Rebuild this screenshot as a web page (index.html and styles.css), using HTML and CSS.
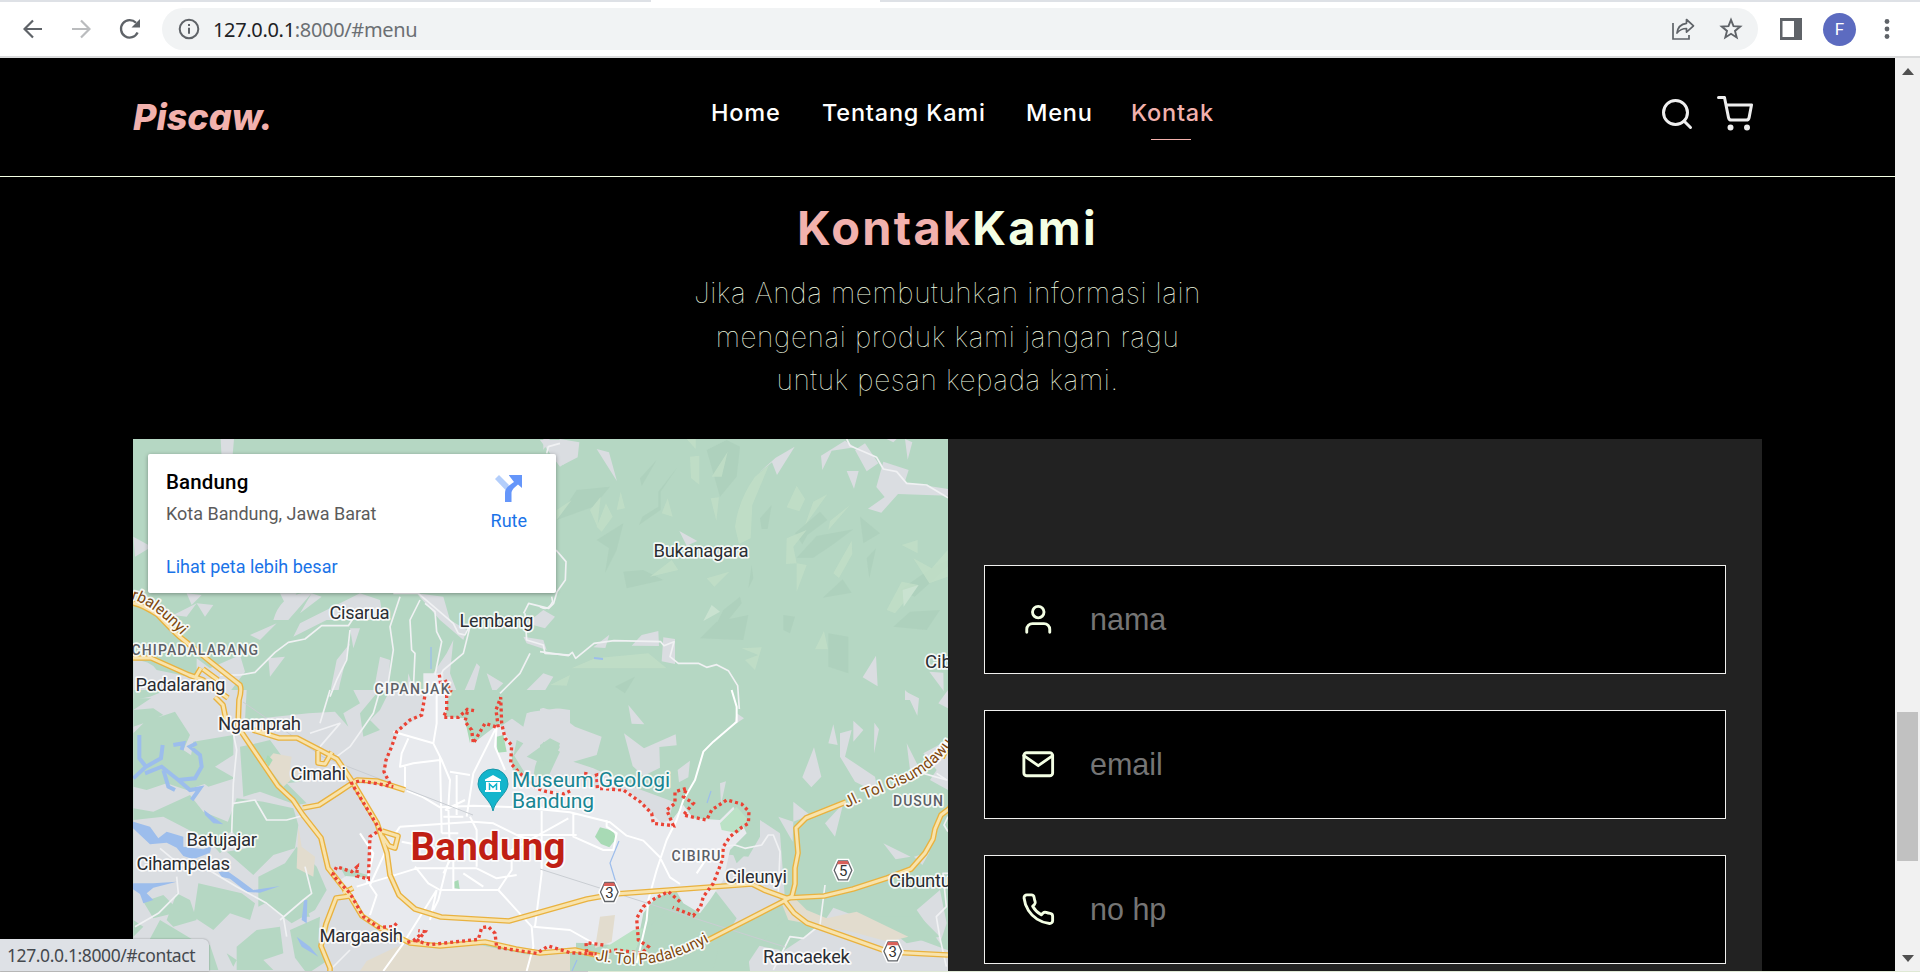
FILE: index.html
```html
<!DOCTYPE html>
<html lang="id">
<head>
<meta charset="utf-8">
<title>Piscaw</title>
<link rel="stylesheet" href="styles.css">
</head>
<body>
<div class="browser">
  <div class="tabstrip"><span class="tab-edge"></span></div>
  <div class="toolbar">
    <svg class="tb-icon back" viewBox="0 0 20 20"><path d="M19 10H2M10 1.500L1.500 10l8.500 8.500" fill="none" stroke="#5f6368" stroke-width="2.200"/></svg>
    <svg class="tb-icon forward" viewBox="0 0 20 20"><path d="M1 10h17M10 1.500L18.500 10 10 18.500" fill="none" stroke="#babcbe" stroke-width="2.200"/></svg>
    <svg class="tb-icon reload" viewBox="0 0 22 22"><path d="M18.600 14.500A8.700 8.700 0 1 1 17 4.800" fill="none" stroke="#5f6368" stroke-width="2.300"/><path d="M21 1v8.500h-8.500z" fill="#5f6368"/></svg>
    <div class="omnibox">
      <svg class="info" viewBox="0 0 22 22"><circle cx="11" cy="11" r="9.300" fill="none" stroke="#5f6368" stroke-width="2"/><path d="M10 9.800h2v6h-2zM10 6h2v2h-2z" fill="#5f6368"/></svg>
      <span class="url"><b>127.0.0.1</b>:8000/#menu</span>
      <svg class="share" viewBox="0 0 24 24"><path d="M2 6v16h16v-4" fill="none" stroke="#5f6368" stroke-width="1.700"/><path d="M15.500 2.500l7 6.300-7 6.300v-3.600c-4 0-6.500 1-9.500 4.500.6-5.200 3.500-9 9.500-9.700z" fill="none" stroke="#5f6368" stroke-width="1.700" stroke-linejoin="round"/></svg>
      <svg class="star" viewBox="0 0 24 24"><path d="M12 2.900l2.500 6.300 6.700.4-5.200 4.300 1.700 6.600-5.700-3.700-5.700 3.700L8 13.900 2.800 9.600l6.700-.4z" fill="none" stroke="#5f6368" stroke-width="1.900"/></svg>
    </div>
    <svg class="panel" viewBox="0 0 22 22"><path d="M0 0h22v22H0zM2.500 3v16H14V3z" fill="#5f6368" fill-rule="evenodd"/></svg>
    <span class="avatar">F</span>
    <svg class="dots" viewBox="0 0 6 22"><g fill="#5f6368"><circle cx="3" cy="3.500" r="2.400"/><circle cx="3" cy="11" r="2.400"/><circle cx="3" cy="18.500" r="2.400"/></g></svg>
  </div>
  <div class="viewport">
    <div class="page">
      <header class="navbar">
        <a class="logo">Piscaw.</a>
        <nav class="links">
          <a class="n-home">Home</a><a class="n-about">Tentang Kami</a><a class="n-menu">Menu</a><a class="n-contact active">Kontak</a>
        </nav>
        <div class="extra">
          <svg class="feather" viewBox="0 0 24 24"><circle cx="11" cy="11" r="8"/><path d="M21 21l-4.350-4.350"/></svg>
          <svg class="feather" viewBox="0 0 24 24"><circle cx="9" cy="21" r="1"/><circle cx="20" cy="21" r="1"/><path d="M1 1h4l2.680 13.390a2 2 0 0 0 2 1.610h9.720a2 2 0 0 0 2-1.610L23 6H6"/></svg>
        </div>
      </header>
      <section class="contact">
        <h2><span>Kontak</span><span class="kami">Kami</span></h2>
        <p><span class="l1">Jika Anda membutuhkan informasi lain</span><br><span class="l2">mengenai produk kami jangan ragu</span><br><span class="l3">untuk pesan kepada kami.</span></p>
        <div class="row">
          <div class="map">
            <svg class="map-art" viewBox="133 439 815 532">
              <defs>
                <path id="p1" d="M131 599C150 604 168 621 184 638"/>
                <path id="p2" d="M595 960C640 968 665 966 712 940"/>
                <path id="p3" d="M847 808C885 787 925 786 954 741"/>
                <g id="shield"><path d="M-5-10H5L9.500 0 5 10H-5L-9.500 0z" fill="#fff" stroke="#fff" stroke-width="3"/><path d="M-4.500-9.500h9L8.800 0 4.500 9.500h-9L-8.800 0z" fill="#fff" stroke="#5f6368" stroke-width="1.300"/><path d="M-4.600-9.300h9.200l1.500 3.300H-6.100z" fill="#d9605a"/></g>
              </defs>
              <rect x="133" y="439" width="815" height="532" fill="#b5d7c3"/>
              <!-- terrain shading -->
              <g transform="translate(540 430) scale(.33333)">
                <g fill="#aacdb9">
                  <path d="M300 145l50-55-45 78zM355 185l57-73-50 73v55l-65 45 10-25 48-30zM50 270l60-90 100-10-50 60zM170 330l80-50-20 80-35 70 12-75zM250 425l60-5 60 30-110 25zM480 625l50-50 95-20-15 75zM525 590l25-50 50-40 5 20-40 50zM660 265l35-40-12 72h-18zM765 310l75-65 22 25-60 45-15 28zM770 383l60-65 110-20-60 45-60 40zM848 503l60-55 27 40zM980 385l28-30-20 90zM1060 590l50-45 90-5-40 60zM865 610l60 10v110l-60-20zM1080 480l100-70 44-20v20l-100 90zM500 60l60-30 40 20-10 90-50 60zM730 555l35 5-15 50-20-10zM225 770l60-30-30 50zM960 260l60 50-50 30zM635 405l-10 70 15-30z" opacity=".6"/>
                </g>
                <g fill="#c1dec7" opacity=".85">
                  <path d="M440 27h27v30zM450 80l28-3v87l-25-20zM515 140l48-75-18 75zM512 205l25-3-8 70zM585 290q10-80 60-150l42-35-50 120-5 100-35 17zM740 232l30-65 25 40-17 37zM795 285l25-70 42-22zM740 325l60-25-40 50 10 50-32 2zM770 400l30 5-30 80zM865 300l65-75-60 48zM880 430l55-98 2 40-40 72zM1085 345l48-15v40zM1120 385l55 30 48-55v80l-55 20zM1040 540l45-85 50 10-70 85zM50 240l45-30-45 60zM150 240l32-40-10 90zM170 290l28-70 20 40-33 45zM230 240l12-55 13 50zM365 250l18-45 15 55zM500 445l68-20-45 45zM330 440l65-50 20 30zM605 655l60-3-20 68-30-30 40-15zM825 658l27-55 12 55zM95 715l70-30 160-15 55 45zM30 765l60-30-10 32z"/>
                </g>
                <path d="M490 573l25-48 25 20zM1088 480l48-15-45 65z" fill="#c9e2d0"/>
              </g>
              <!-- bare land -->
              <g fill="#dadde1">
                <g transform="translate(130 430) scale(.33333)"><path d="M272 27h40l-5 60h-32zM10 320l55 30-50 30zM170 490l45 5-30 30zM430 570q20-70 85-80h30l-70 80zM450 490h50l-30 40zM130 555l70-35-30 40zM200 520l50 5-25 35zM510 550l35-60 30 10zM630 520l60-30 60 20 10 60h-170l-100 50 20-40zM860 490l80 10 20 70 50 30-10 30-70-60zM1190 580l50-40 35 20-30 35zM1180 620l60 10 10 30-60-20zM415 685l50-5-45 60zM360 615l80-35-50 50zM660 595h30l-20 60zM1230 30h80l10 60-30 20zM1070 730l50 30-30 30zM1180 790l60-60 30 10-30 50zM910 730l40-60 20-40-10 100 30 80H870zM1000 790l40-90 10 10-20 80zM830 790l5-60 20 60zM730 790l20-110 30 10-5 100zM10 690q50 0 70 30l120 25v-60l40 30 90-40 15 50-60 80H10zM600 790l20-100 40-50-30 120-10 50z"/></g>
                <g transform="translate(540 430) scale(.33333)"><path d="M60 27l58 10-5 45-45 23-20-60zM10 27h20L10 60zM170 57l37 10 24 87zM418 303l54 30-32 14zM657 128l50-45 57-33-53 85-15-38zM843 77l72-45 30 20-70 10-28 58zM920 123h36l-14 53zM945 60l30-20 40 60-35 24zM1030 95l76 25-12 37 130 20v20l-150-5-50 56-40-12 50-35-25-30zM1095 27l22 10-14 52zM1040 27h30l-10 10zM275 647l30-32 50-12 2 45zM370 622l35 5v75l-40-8zM160 652l48-38-12 40zM968 742l40-65 5 92zM1168 725l42 3 1 55zM1095 780l30 30h-30z"/></g>
                <g transform="translate(130 690) scale(.33333)"><path d="M10 60L100 0h760l40 0-20 80-80 50-30 110 30 50-120-10 80 140-30 20v120l-100-30 80 150 160 70v93H10zM1110 110l60-40 150-20v280l-110-40-80-130z"/></g>
                <g transform="translate(540 690) scale(.33333)"><path d="M0 50l45 15 60 45 80 30-15 55-70 20 60 20 130 60 110 40-20 80-120-10-60-70-200-50zM265 45l48 58-38-2zM252 130l60 45 95-42 3 33-52 5 2 62-50 25-32-30zM413 240l37-28-5 50-28 15zM590 70l22 15-30 20zM865 160l15-57 13 62zM940 92l30 28-30 35zM1003 98l14 20-15 72zM1098 5l39 20-5 52zM1195 40l29-40v55zM787 262l35-90 22 88-30 32zM900 130l35-10-20 80 90 60 10 50-70-35-45-75zM1100 160l48 95-38-15zM855 400l55-60-25 100zM760 335l50 40-50 20zM715 380l45 15-2 60zM660 390l60 40 15 200-100-30-170-60 60-50 100 10 35-60zM1030 460l82 40-45 8zM1122 500l47-15-22 40zM555 540l165 70 30 40-200 70-60-60zM1150 190l74-40v150l-54-30 20-30zM400 732l45-38-15 65zM540 280l18-6-15 70zM640 843l150-100 70-60 20-30 350 130v60zM620 760l100 20-40 63h-50zM1130 660l70-60 20 100-20 60z"/></g>
              </g>
              <!-- forest patches over bare land -->
              <g transform="translate(130 690) scale(.33333)" fill="#b5d7c3">
                <path d="M10 30l50-10 50-20h-100zM350 0h320l20 40-50 30 15 40-40-45-80 5-190 20zM330 170l50-10 40-10 40 55 50 70-40 5 60 60-30 5-110-40-50 15zM320 325l80 10 90 20 15 50-10 70-65 20-60 60-80-70 60-10-60-70zM385 560l80-40 35-50 60 60 30 70-35 60-70 40-80-60-20 10zM140 610l40 20 20 60-70 20-20-20zM205 580l130 30 40 30-15 50-60-20-50 50-60-40zM10 690l30 20-30 30zM90 690l100 60 50 15 25 75H10zM320 770l60-50 70-10 10 80-60 20 30 30H320zM480 720l90-40-5 70 30 60-50 33h-20l-30-40zM690 70l50-60 40-10-30 60-30 30 30 30-50 20zM290 790l30 20-10 20zM500 680l20-50 20 50z"/>
                <path d="M10 355l60 10 110-50 40 50 110 45-60 35-60-8-110-57-90 10zM10 130l40-40 40-10 45-15 45 70-20 45 60 40 10 60-60 20-60-20-60 20-40-10zM190 155l120-20v60l-55 35 60 35-80 25-60-45zM10 60l60-5 30 20-60 25-30 10z"/>
                <path d="M960 0h360v60l-70-10-60 20-10 40-70-50-60 40-20 60-30-80-50-20zM1190 200l70-50 30 20-30 60zM1160 150l20 10-30 40zM1215 230l25-75 50 30-35 75-45 0z"/>
                <path d="M240 455l30-25 30 30-30 30zM40 635l60-20 50 50-80 20z"/>
              </g>
              <g transform="translate(540 690) scale(.33333)" fill="#b5d7c3">
                <path d="M0 165l30-20 30 15-20 60-40-10zM300 735l90-80 60-20 70-40 70 90-40 70-180 70h-90zM540 760l90-60 100-80 10 60-70 70-60 90h-90zM570 470l70 0-50 50zM650 390l-40 60 10-60zM1000 680l100 80 100-20-60-60z"/>
              </g>
              <!-- city -->
              <g fill="#e8eaee">
                <g transform="translate(130 690) scale(.33333)"><path d="M885 0h70l-8 80 55 5 28 75 78-60 35 60 5 80 60 50 130 0v500l-100-5-170-30-210 8-160-75-80-110 30-20 65 5 5-125 30-20-80-140 115 10-18-45 32-115 75-50zM880-50h60v60h-60z"/></g>
                <g transform="translate(540 690) scale(.33333)"><path d="M-20 290l190 0 100 15 65 65 30 30 35-15 30-40 30 40 80 5 40-40 40 80-50 50-20 90-40 60-30 40-50-30-20-35-60 15-40 50-20 100-140-10-150-5z"/></g>
              </g>
              <g transform="translate(130 690) scale(.33333)" fill="#e2dcce">
                <path d="M430 190l55 10-5 35 30 10-50 45-55-70zM505 410l10 60 40 30-5 60-50-25zM800 770l200-15 200 40 120-5v53H690l20-30z"/>
                <path d="M405 215l8-20 15 15-12 20z" fill="#a8dab5"/>
              </g>
              <g transform="translate(540 690) scale(.33333)" fill="#e2dcce">
                <path d="M760 620l40 40 60 25 90-20 155 75-60 15-110-30-190-35-20-50zM180 680l45-5-10 80-50 20z"/>
                <g fill="#bbe2c6"><path d="M540 400l50-50 35 40-30 40-50-10zM200 770l80-50 30-5-25 70-60 10z"/></g>
                <path d="M165 440l15-28 40 10 8 25-20 25-25-10z" fill="#a8dab5"/>
              </g>
              <g transform="translate(130 690) scale(.33333)" fill="#a8dab5"><path d="M1100 140l20-5 10 50-28 3zM972 575l13-5 4 27-16-3zM1005 90l20 30-5 40z"/></g>
              <!-- water -->
              <g transform="translate(130 690) scale(.33333)" fill="#9cbdec">
                <path d="M10 395l50 15 25 35 25-20 50 15 0 30 60 8 25-10-5 20-50 20-30-10-20-25-30-15-50 5-55-52zM222 360l20 15 38 28-30-3-25-25zM265 545l30 0 35 25 40 30 80-12-60 20-40-2-50-40-25-5zM10 580l60 0 70-5-70 18-20 17 20 20-30 10-10-28-25-17zM522 630l10 0-2 70-15-10zM500 740l40 30 25 30-50-30z"/>
                <path d="M28 135l0 70 20 25-38 35M48 230l45-25 5-40M45 250l50-20 50 40 50-5 20-35-5-35-30-25 20-10M130 165l30-5-5 20M145 270l35 30 30-5-25 35M100 240l15 50 20 10" fill="none" stroke="#9cbdec" stroke-width="12"/>
              </g>
              <g fill="none" stroke="#9cbdec" stroke-width="1.200">
                <path d="M431 647v22M619 841l-9 22 6 20M711 791l-4 12M577 960l-5 11"/><path d="M594 658l9 1" stroke-width="2"/>
              </g>
              <!-- minor roads -->
              <g fill="none" stroke="#f0f1f3" stroke-width="5" stroke-linejoin="round">
                <g transform="translate(130 430) scale(.33333)">
                  <path d="M1250 70l5-20 35-10M1278 360l30 35-2 55-25 35-10 35-15 15-60-15-15 30M330 735l45-8 60-60 40-30 50-10 50-40h80l20-30M660 600l-10 90-30 60-20 50M790 490h75l105 90 15 30M810 500l-30 90 10 70-20 130M870 510l-30 60 5 90 10 10-5 110M885 520l30 25 5 60 15 30-20 100M985 610l20 5 15-30M1020 590l-20 80-60 50-15 30M1185 550l5 80 50 15 5 25 75 5M1200 670l-30 60-60 60M330 735l-60 0"/>
                </g>
                <g transform="translate(540 430) scale(.33333)">
                  <path d="M920 27l10 20 80 35 20 35 40 8 30 35 60 5 64 38M0 530q25 15 38-15l-3-15M0 665l85 12 12-10 10 18 55-45 60-8 140 3 10 12 30-12-12 45 25 20 60 0 25 12 30-8 35 18 28 45 5 70"/>
                </g>
                <g transform="translate(130 690) scale(.33333)">
                  <path d="M345 120l-35 10 10 50-10 100-5 150M310 340l65-10 35 60 60 0 55-15M620 200l40-30 70-100 20-70M540 130l90-30-60 70M600 0l-30 100M470 740l-10-60-50-40-90-50-100-60-70-5-60-50M140 560l5 50-60 60-70 40M450 690l70-60 25-20-20-80M600 840l60-60"/>
                </g>
                <g transform="translate(540 690) scale(.33333)">
                  <path d="M550 470l35-5 30 10 50-10 20-30 15 0 20 50-5 120M700 840l50-100 40 5 50-40 15-120M1224 550l-15 0 10 100-30 30 10 60 20 90M1224 380l-12 25 12 20M1150 250l70 20-30-20"/>
                </g>
              </g>
              <g fill="none" stroke="#fff" stroke-width="6" stroke-linejoin="round">
                <g transform="translate(330 660) scale(.33333)">
                  <path d="M330 60l-10 50 0 80-10 60 25 50 25 60-5 80 5 150-15 50-20 80-15 30M190 215l120 35M235 235l-20 45-5 40 40-10 80-10M330 290l5 230M225 320l0 70M230 392l50 20 50 30 100-5 140 5 150 15 120 30 50 40 50 15 50 50 30 60 30 20M500 200l-40 80-30 60-20 130M500 200l-5 60 30 70M360 335l60 10M210 500l220-15 60 5 80 40 90 20M380 345l0 120M210 500l-20 30M215 545l100 20M80 680l100-30 80-25 180 0 60 30 60-10M255 620l40 50 35 20 175 0 40-60 0-60 170-95M320 690l-100 160-60 83M320 690l-20 90M400 640l60 40M340 640l30-60 0 110M505 690l100 110 5 60-20 73M610 800l110 10 80 45M635 440l0 200-20 160M90 520l40 60-20 90M180 545l-60 130 20 30-20 60M730 460l0 70 90 40 30 0 10-50-30-20v-20M560 525l180 0M1060 420l-20 60-30 60-30 90-25 90-5 60-30 130M1100 640l40-60M420 470l20 40 0 110M345 450l60-30M340 470h60M335 520h50"/>
                </g>
                <g transform="translate(540 690) scale(.33333)">
                  <path d="M575 0l15 50 0 45-70 60-30 30-25 85-35 60"/>
                </g>
              </g>
              <path d="M540 869L785 947M243 702l80 55 150 58" fill="none" stroke="#c9cdd2" stroke-width="1"/>
              <!-- toll roads -->
              <g fill="none" stroke-linejoin="round">
                <g stroke="#e9b23f" stroke-width="5.700">
                  <path d="M133 603Q143 605 158 615Q172 630 180 637L212 663L240 685Q242 690 239 700L238 727L278 786L293 800L303 815L321 838L328 868L350 896L362 916L380 928L410 943L440 946L485 942L516 949L540 953L575 950L600 956"/>
                  <path d="M133 658h18l38 17 14 5 25 18M201 668l-6 10M203 669l15 11M215 697l8 8 3 15M253 730l26 8h18l25 13 15 8 15 22 25 42 10 30 3 22 9 20 16 14 26 8 68 4 32-9 46-13 28-5 137-10 12 6 22 8 38-2 29-7 34-11 24-9 14-16 8-14 2-10 6-14 9-7 3-10 8-5h60"/>
                  <path d="M303 808l16-3 20-13 18-12 20 1 28 9M350 896l-14 2-10 26-5 22 9 22v8M343 893l10-5"/>
                  <path d="M708 940l74-38 10-6 3-12 0-16 3-15-2-25 10-10 40-16M948 746l-6 12M784 900l10 13 13 10 82 29 59 3M318 751l0 12 7 1 7-12M382 831l16 5-3 12-6-2-7-10"/>
                </g>
                <g stroke="#f8e3ac" stroke-width="3">
                  <path d="M133 603Q143 605 158 615Q172 630 180 637L212 663L240 685Q242 690 239 700L238 727L278 786L293 800L303 815L321 838L328 868L350 896L362 916L380 928L410 943L440 946L485 942L516 949L540 953L575 950L600 956"/>
                  <path d="M133 658h18l38 17 14 5 25 18M201 668l-6 10M203 669l15 11M215 697l8 8 3 15M253 730l26 8h18l25 13 15 8 15 22 25 42 10 30 3 22 9 20 16 14 26 8 68 4 32-9 46-13 28-5 137-10 12 6 22 8 38-2 29-7 34-11 24-9 14-16 8-14 2-10 6-14 9-7 3-10 8-5h60"/>
                  <path d="M303 808l16-3 20-13 18-12 20 1 28 9M350 896l-14 2-10 26-5 22 9 22v8M343 893l10-5"/>
                  <path d="M708 940l74-38 10-6 3-12 0-16 3-15-2-25 10-10 40-16M948 746l-6 12M784 900l10 13 13 10 82 29 59 3M318 751l0 12 7 1 7-12M382 831l16 5-3 12-6-2-7-10"/>
                </g>
              </g>
              <!-- city boundary -->
              <g fill="none" stroke="#ea4335" stroke-width="10" stroke-dasharray="9 9" transform="translate(330 660) scale(.33333)">
                <path d="M328 44L332 75M345 60L362 92L350 105L350 150L340 172L385 172L412 148L432 152M412 155L405 185L425 210L430 250L465 190L505 203L498 150L512 112L515 190L525 235L545 255L542 310L570 340L620 385L650 395L700 402L722 392M768 336L765 358L800 345L802 385L880 390L930 425L965 460L970 490L1030 497L1010 450L1035 430L1035 395L1070 385L1060 410L1090 430L1060 465L1130 480L1145 450L1190 420L1235 432L1257 455L1255 490L1235 502L1200 530L1180 560L1177 600L1150 670L1120 710L1112 740L1090 767L1028 742M1050 725L1015 695L975 715L940 740L920 775L925 840L955 860L935 880L860 870L830 875M820 855L768 848L770 880L800 882M790 882L720 878L655 858L620 880L500 862L495 820L475 800L455 803L445 838L300 854L262 843L285 815L265 812M270 825L250 842L230 848"/>
                <path d="M200 790L190 800L145 802L100 770L60 700L8 645L20 620L65 635L82 620L80 648L115 657L120 530L150 510L65 370L90 362L190 380M180 372L162 335L168 300L185 260L200 215L240 180L275 165L285 105"/>
              </g>
              <use href="#shield" x="609.300" y="892"/><use href="#shield" x="843" y="870.300"/><use href="#shield" x="892.700" y="951.300"/>
              <g class="lbl num"><text x="605.200" y="897.500">3</text><text x="838.900" y="876">5</text><text x="888.500" y="957">3</text></g>
              <path d="M493 811c-2-11-15-18-15-27a15 15 0 0 1 30 0c0 9-13 16-15 27z" fill="#13b5cc" stroke="#1896a8" stroke-width="1"/>
              <path d="M493 775l8 4.500v1.500h-16v-1.500zM486 782h14v8h1v2h-16v-2h1z" fill="#fff"/><path d="M489.500 790v-6l3.500 3.500 3.500-3.500v6" fill="none" stroke="#13b5cc" stroke-width="1.500"/>
              <g class="lbl town">
                <text x="653.500" y="557.300" textLength="95">Bukanagara</text><text x="329.500" y="619" textLength="60">Cisarua</text><text x="459.500" y="627" textLength="74">Lembang</text>
                <text x="135.500" y="690.500" textLength="90">Padalarang</text><text x="218" y="729.500" textLength="83">Ngamprah</text><text x="290.500" y="779.500" textLength="55.500">Cimahi</text>
                <text x="186.500" y="846" textLength="70.500">Batujajar</text><text x="136.500" y="869.500" textLength="93.500">Cihampelas</text><text x="319.500" y="942.300" textLength="83.500">Margaasih</text>
                <text x="725" y="883.300" textLength="62">Cileunyi</text><text x="889" y="887.300" textLength="62">Cibuntu</text><text x="763" y="962.500" textLength="87">Rancaekek</text><text x="925" y="667.500">Cib</text>
              </g>
              <g class="lbl district">
                <text x="131.500" y="654.500" textLength="126.500">CHIPADALARANG</text><text x="374.500" y="693.500" textLength="75">CIPANJAK</text><text x="671.500" y="861.300" textLength="49">CIBIRU</text><text x="893" y="805.500" textLength="50">DUSUN</text>
              </g>
              <g class="lbl museum"><text x="512" y="787.300" textLength="158">Museum Geologi</text><text x="512" y="808" textLength="82">Bandung</text></g>
              <g class="lbl city"><text x="410.500" y="860" textLength="155">Bandung</text></g>
              <g class="lbl road"><text><textPath href="#p1">rbaleunyi</textPath></text><text><textPath href="#p2" textLength="119">Jl. Tol Padaleunyi</textPath></text><text><textPath href="#p3">Jl. Tol Cisumdawu</textPath></text></g>
            </svg>
            <div class="place-card">
              <div class="place">
                <strong>Bandung</strong>
                <span class="addr">Kota Bandung, Jawa Barat</span>
                <a class="bigger">Lihat peta lebih besar</a>
              </div>
              <div class="route">
                <svg viewBox="0 0 27 27"><path d="M0 4l4-4 10 10-3.500 5z" fill="#b3cefb"/><path d="M10 27V18c0-4 2-6.500 9-11l-5-6.500V0h13v13l-4-3.500c-5 4-6.500 6-6.500 9V27z" fill="#6596fa"/></svg>
                <a>Rute</a>
              </div>
            </div>
          </div>
          <form class="form">
            <label class="field"><svg class="feather" viewBox="0 0 24 24"><path d="M20 21v-2a4 4 0 0 0-4-4H8a4 4 0 0 0-4 4v2"/><circle cx="12" cy="7" r="4"/></svg><input type="text" placeholder="nama"></label>
            <label class="field"><svg class="feather" viewBox="0 0 24 24"><path d="M4 4h16c1.100 0 2 .9 2 2v12c0 1.100-.9 2-2 2H4c-1.100 0-2-.9-2-2V6c0-1.100.9-2 2-2z"/><path d="M22 6l-10 7L2 6"/></svg><input type="text" placeholder="email"></label>
            <label class="field"><svg class="feather" viewBox="0 0 24 24"><path d="M22 16.920v3a2 2 0 0 1-2.180 2 19.790 19.790 0 0 1-8.630-3.070 19.500 19.500 0 0 1-6-6 19.790 19.790 0 0 1-3.070-8.670A2 2 0 0 1 4.110 2h3a2 2 0 0 1 2 1.720c.127.960.361 1.903.7 2.810a2 2 0 0 1-.45 2.110L8.090 9.910a16 16 0 0 0 6 6l1.270-1.270a2 2 0 0 1 2.110-.45c.907.339 1.850.573 2.810.7A2 2 0 0 1 22 16.920z"/></svg><input type="text" placeholder="no hp"></label>
          </form>
        </div>
      </section>
    </div>
    <div class="scrollbar">
      <svg class="arrow" viewBox="0 0 12 7"><path d="M0 7L6 0l6 7z"/></svg>
      <span class="thumb"></span>
      <svg class="arrow" viewBox="0 0 12 7"><path d="M0 0l6 7 6-7z"/></svg>
    </div>
  </div>
  <div class="bottom-edge"></div>
  <div class="status">127.0.0.1:8000/#contact</div>
</div>
</body>
</html>
```
FILE: styles.css
```css
* { box-sizing: border-box; }
body { margin: 0; background: #000; }
.browser { position: relative; width: 1920px; height: 972px; overflow: hidden; display: flex; flex-direction: column; }
svg { display: block; flex: none; }

.tabstrip { height: 2px; background: #dee1e6; padding-left: 651px; }
.tab-edge { display: block; width: 229px; height: 2px; background: #fff; }
.toolbar { height: 56px; padding: 6px 29px 6px 23px; background: #fff; border-bottom: 2px solid #dadbdc; display: flex; align-items: center; }
.tb-icon { width: 20px; height: 20px; margin-right: 28px; }
.reload { width: 22px; height: 22px; margin-right: 21px; }
.omnibox { width: 1596px; height: 42px; border-radius: 21px; background: #f1f3f4; display: flex; align-items: center; padding: 0 15px 0 16px; }
.info { width: 22px; height: 22px; margin-right: 13px; }
.url { flex: 1; font: 20px "Noto Sans", sans-serif; color: #6b6f73; letter-spacing: -.33px; }
.url b { font-weight: 400; color: #202124; }
.share { width: 24px; height: 24px; margin-right: 24px; }
.star { width: 24px; height: 24px; }
.panel { width: 22px; height: 22px; margin-left: 22px; }
.avatar { width: 33px; height: 33px; margin: 0 28px 0 21px; border-radius: 50%; background: #5c6bc0; color: #fff; font: 17px/33px Roboto, sans-serif; text-align: center; }
.dots { width: 6px; height: 22px; }

.viewport { height: 913px; display: flex; }
.page { width: 1895px; background: #000; overflow: hidden; }
.scrollbar { width: 25px; background: #f1f1f1; display: flex; flex-direction: column; align-items: center; padding: 10px 0 9px; }
.arrow { width: 12px; height: 7px; fill: #505050; }
.thumb { width: 21px; height: 149px; background: #c1c1c1; margin: 637px 0 auto; }

.feather { fill: none; stroke: currentColor; stroke-width: 2; stroke-linecap: round; stroke-linejoin: round; }
.navbar { height: 119px; border-bottom: 1px solid #f4ffe4; padding: 0 142px 0 133px; display: flex; font-family: Inter, sans-serif; }
.logo { width: 578px; padding-top: 37px; font-size: 36px; line-height: 44px; font-weight: 800; font-style: italic; color: #f2b1ad; letter-spacing: 0; }
.links { padding: 38px 0 0 0; display: flex; font-size: 23.500px; line-height: 34px; font-weight: 450; color: #fff; letter-spacing: .8px; }
.links a { white-space: nowrap; }
.n-home { width: 111px; }
.n-about { width: 204px; }
.n-menu { width: 105px; }
.n-contact { width: 80px; }
.links .active { color: #f2b1ad; height: 45px; background: linear-gradient(#f2b1ad, #f2b1ad) 50% 43px / 40px 1px no-repeat; }
.extra { display: flex; gap: 22px; padding-top: 38px; margin-left: auto; color: #eee; }
.extra svg { width: 36px; height: 36px; }

.contact { font-family: Inter, sans-serif; padding: 0 133px; }
h2 { margin: 0; padding-top: 22px; text-align: center; font-size: 47px; line-height: 58px; font-weight: 700; color: #f2b1ad; letter-spacing: 2.200px; }
.kami { color: #f4ffe4; }
.contact p { margin: 15px 0 0; height: 167px; text-align: center; color: #f4ffe4; font-size: 28px; line-height: 43.500px; font-weight: 100; letter-spacing: .6px; white-space: nowrap; }
.row { display: flex; height: 600px; background: #222; }
.map { position: relative; width: 815px; height: 532px; overflow: hidden; background: #b5d7c3; }
.map-art { width: 815px; height: 532px; }
.lbl { font-family: Roboto, sans-serif; paint-order: stroke; stroke: #fff; stroke-opacity: .85; stroke-width: 3.500px; stroke-linejoin: round; }
.town { font-size: 18.500px; fill: #2b2e33; }
.district { font-size: 14px; font-weight: 500; fill: #5c6066; }
.museum { font-size: 21px; fill: #188693; }
.city { font-size: 38.500px; font-weight: 700; fill: #c01f14; }
.road { font-size: 15.500px; fill: #80480f; }
.num { font-size: 15px; fill: #333; stroke: none; }
.place-card { position: absolute; left: 15px; top: 15px; width: 408px; height: 139px; background: #fff; border-radius: 2px; box-shadow: 0 1px 4px rgba(0,0,0,.35); display: flex; justify-content: space-between; padding: 0 29px 0 18px; font-family: Roboto, sans-serif; }
.place { display: flex; flex-direction: column; font-size: 18px; white-space: nowrap; }
.place strong { font-size: 20.500px; font-weight: 500; line-height: 28px; margin-top: 14px; letter-spacing: .15px; }
.addr { color: #5b5b5b; line-height: 24px; margin-top: 6px; }
.place a, .route a { color: #1a73e8; line-height: 24px; }
.bigger { margin-top: 29px; }
.route { display: flex; flex-direction: column; align-items: center; font-size: 18px; padding-top: 21px; }
.route svg { width: 27px; height: 27px; margin-bottom: 7px; }

.form { flex: 1; padding: 126px 36px 0; display: flex; flex-direction: column; gap: 36px; }
.field { height: 109px; flex: none; border: 1px solid #f0f0ee; background: #000; color: #f4ffe4; display: flex; align-items: center; padding-left: 36px; }
.field svg { width: 34.500px; height: 34.500px; }
.field input { flex: 1; margin: 0 0 0 34.500px; padding: 0; border: 0; outline: 0; background: none; color: #fff; font: 30.500px "Liberation Sans", Arial, sans-serif; }
.field input::placeholder { color: #757575; }

.bottom-edge { height: 1px; background: linear-gradient(90deg, #c8c8c8 588px, #dfe9d5 588px); }
.status { position: absolute; left: 0; bottom: 1px; width: 209px; height: 32px; padding-left: 7px; background: #dee1e6; border-radius: 0 6px 0 0; box-shadow: 0 0 2px rgba(0,0,0,.35); font: 17.500px/32px "Noto Sans", sans-serif; color: #45494e; letter-spacing: -.4px; white-space: nowrap; }
```
